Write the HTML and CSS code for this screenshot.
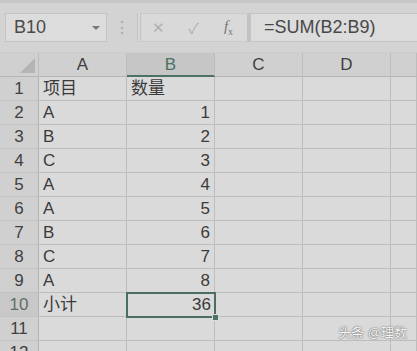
FILE: index.html
```html
<!DOCTYPE html>
<html lang="zh-cn">

<head>
    <meta charset="utf-8">
    <title>SUM</title>
    <link rel="stylesheet" href="styles.css">
</head>

<body>
    <div class="formula-bar">
        <div class="name-box">
            <span>B10</span>
            <span class="arrow"></span>
        </div>
        <div class="dots">⋮</div>
        <div class="tools">
            <span class="tool">✕</span>
            <span class="tool">✓</span>
            <span class="tool fx"><i>f</i><sub>x</sub></span>
        </div>
        <div class="formula">=SUM(B2:B9)</div>
    </div>

    <div class="sheet">
        <div class="hd corner"><span class="tri"></span></div>
        <div class="hd">A</div>
        <div class="hd active">B</div>
        <div class="hd">C</div>
        <div class="hd">D</div>
        <div class="hd"></div>

        <div class="rh">1</div><div class="c">项目</div><div class="c">数量</div><div class="c"></div><div class="c"></div><div class="c"></div>
        <div class="rh">2</div><div class="c">A</div><div class="c num">1</div><div class="c"></div><div class="c"></div><div class="c"></div>
        <div class="rh">3</div><div class="c">B</div><div class="c num">2</div><div class="c"></div><div class="c"></div><div class="c"></div>
        <div class="rh">4</div><div class="c">C</div><div class="c num">3</div><div class="c"></div><div class="c"></div><div class="c"></div>
        <div class="rh">5</div><div class="c">A</div><div class="c num">4</div><div class="c"></div><div class="c"></div><div class="c"></div>
        <div class="rh">6</div><div class="c">A</div><div class="c num">5</div><div class="c"></div><div class="c"></div><div class="c"></div>
        <div class="rh">7</div><div class="c">B</div><div class="c num">6</div><div class="c"></div><div class="c"></div><div class="c"></div>
        <div class="rh">8</div><div class="c">C</div><div class="c num">7</div><div class="c"></div><div class="c"></div><div class="c"></div>
        <div class="rh">9</div><div class="c">A</div><div class="c num">8</div><div class="c"></div><div class="c"></div><div class="c"></div>
        <div class="rh active">10</div><div class="c">小计</div><div class="c num selected">36<span class="handle"></span></div><div class="c"></div><div class="c"></div><div class="c"></div>
        <div class="rh">11</div><div class="c"></div><div class="c"></div><div class="c"></div><div class="c"></div><div class="c"></div>
        <div class="rh">12</div><div class="c"></div><div class="c"></div><div class="c"></div><div class="c"></div><div class="c"></div>
    </div>

    <div class="watermark">头条 @理数</div>
</body>

</html>
```

FILE: styles.css
```css
body {
    margin: 0;
    background-color: #d8d8d8;
    font-family: "Liberation Sans", "Noto Sans CJK SC", sans-serif;
    color: #3a3a3a;
    position: relative;
    height: 351px;
    overflow: hidden;
}

/* 编辑栏 */
.formula-bar {
    display: flex;
    align-items: center;
    height: 52px;
    padding-left: 5px;
    box-sizing: border-box;
    background-color: #d3d3d3;
    border-top: 3px solid #c6c6c6;
}

.name-box {
    display: flex;
    align-items: center;
    justify-content: space-between;
    width: 102px;
    height: 29px;
    box-sizing: border-box;
    padding: 0 6px 0 8px;
    background-color: #dcdcdc;
    border: 1px solid #c4c4c4;
    font-size: 18px;
    color: #4a4a4a;
}

.arrow {
    width: 0;
    height: 0;
    border-left: 4px solid transparent;
    border-right: 4px solid transparent;
    border-top: 4px solid #777;
}

.dots {
    width: 30px;
    text-align: center;
    color: #a8a8a8;
    font-size: 16px;
}

.tools {
    display: flex;
    align-items: center;
    width: 113px;
    height: 29px;
    box-sizing: border-box;
    background-color: #d9d9d9;
    border-left: 4px double #c2c2c2;
    border-right: 3px solid #c2c2c2;
    border-top: 1px solid #cacaca;
    border-bottom: 1px solid #cacaca;
}

.tool {
    width: 35px;
    text-align: center;
    color: #b0b0b0;
    font-size: 15px;
}

.fx {
    color: #777;
    font-family: "Liberation Serif", serif;
    font-size: 15px;
}

.fx sub {
    font-size: 10px;
}

.formula {
    flex: 1;
    height: 29px;
    line-height: 27px;
    box-sizing: border-box;
    padding-left: 13px;
    background-color: #dcdcdc;
    border: 1px solid #c4c4c4;
    border-right: none;
    font-size: 18px;
    color: #484848;
}

/* 表格 */
.sheet {
    display: grid;
    grid-template-columns: 39px 88px 88px 88px 88px 1fr;
    grid-auto-rows: 24px;
    margin-top: 0;
    border-top: 1px solid #cccccc;
    font-size: 17px;
}

.hd {
    background-color: #d0d0d0;
    border-right: 1px solid #bdbdbd;
    border-bottom: 1px solid #b5b5b5;
    text-align: center;
    line-height: 23px;
    box-sizing: border-box;
    color: #404040;
}

.hd.active {
    background-color: #c6c6c6;
    color: #4c7263;
    border-bottom: 2px solid #4c7263;
}

.corner {
    position: relative;
}

.tri {
    position: absolute;
    right: 3px;
    bottom: 3px;
    width: 0;
    height: 0;
    border-left: 15px solid transparent;
    border-bottom: 15px solid #b4b4b4;
}

.rh {
    background-color: #d0d0d0;
    border-right: 1px solid #b5b5b5;
    border-bottom: 1px solid #c2c2c2;
    text-align: center;
    line-height: 24px;
    box-sizing: border-box;
    color: #404040;
}

.rh.active {
    background-color: #c8c8c8;
    color: #5e6e66;
}

.c {
    background-color: #dadada;
    border-right: 1px solid #bdbdbd;
    border-bottom: 1px solid #bdbdbd;
    box-sizing: border-box;
    padding: 0 4px;
    line-height: 24px;
    white-space: nowrap;
}

.num {
    text-align: right;
}

.selected {
    position: relative;
    border: none;
    box-shadow: 0 0 0 1px #4c6e5e inset;
    outline: 2px solid #4c6e5e;
    outline-offset: -1px;
}

.handle {
    position: absolute;
    right: -4px;
    bottom: -4px;
    width: 5px;
    height: 5px;
    background-color: #4c7263;
    border: 1px solid #dadada;
}

.watermark {
    position: absolute;
    right: 10px;
    bottom: 10px;
    font-size: 13px;
    color: #f4f4f4;
    text-shadow: 0 0 2px #777, 0 0 1px #666;
}
```
